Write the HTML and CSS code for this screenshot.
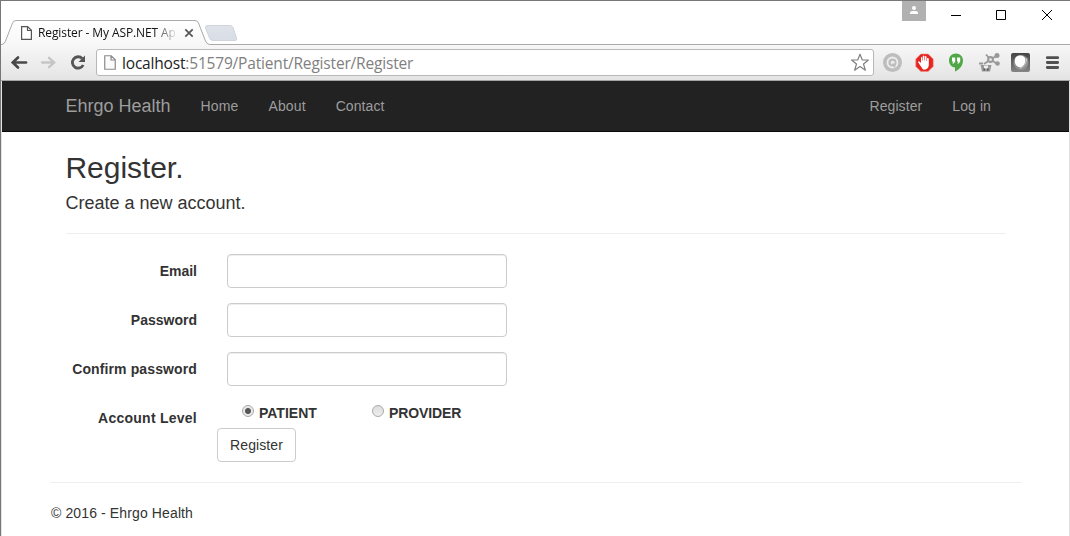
FILE: index.html
```html
<!DOCTYPE html>
<html lang="en">
<head>
<meta charset="utf-8">
<title>Register - My ASP.NET Application</title>
<link rel="stylesheet" href="styles.css">
</head>
<body>
<div class="window">
  <header class="tabstrip">
    <svg class="tab-shapes" width="1069" height="45" viewBox="1 0 1069 45">
      <defs>
        <linearGradient id="tabfill" x1="0" y1="0" x2="0" y2="1"><stop offset="0" stop-color="#fff"/><stop offset="1" stop-color="#f7f7f7"/></linearGradient>
        <linearGradient id="newtab" x1="0" y1="0" x2="0" y2="1"><stop offset="0" stop-color="#dfe3ea"/><stop offset="1" stop-color="#d8dde6"/></linearGradient>
      </defs>
      <path d="M1 44.500H2Q4.500 44 5.500 41L12.500 23Q13.500 20.500 16 20.500H195Q197.500 20.500 198.500 23L205.500 41Q206.500 44 209.500 44.500V45H1Z" fill="url(#tabfill)"/>
      <path d="M1 44.500H2Q4.500 44 5.500 41L12.500 23Q13.500 20.500 16 20.500H195Q197.500 20.500 198.500 23L205.500 41Q206.500 44 209.500 44.500H1070" fill="none" stroke="#aaa"/>
      <path d="M208 25.500H230Q232 25.500 233 27.500L236.500 38Q237.500 40.500 235 40.500H213Q210.500 40.500 209.500 38L205.500 28Q205 25.500 208 25.500Z" fill="url(#newtab)" stroke="#d0d4db"/>
    </svg>
    <div class="tab">
      <svg class="tab-page" width="11" height="14" viewBox="0 0 11 14"><path d="M.6.6h6l3.800 3.700v9H.6zM6.500 1v3.500h3.700" fill="#fff" stroke="#555" stroke-width="1.200"/></svg>
      <span class="tab-title">Register - My ASP.NET Ap</span>
      <svg class="tab-close" width="10" height="10" viewBox="0 0 10 10"><path d="M1.300 1.300l7.400 7.400M8.700 1.300l-7.400 7.400" stroke="#555" stroke-width="1.700"/></svg>
    </div>
    <div class="controls">
      <div class="profile"><svg width="10" height="9" viewBox="0 0 10 9"><circle cx="5" cy="2" r="2" fill="#fff"/><path d="M1 8V6.500Q1 5 3.500 5h3Q9 5 9 6.500V8z" fill="#fff"/></svg></div>
      <svg class="winbtns" width="105" height="12" viewBox="0 0 105 12"><g fill="none" stroke="#000"><path d="M0 6.500h10M45.500 1.500h9v9h-9zM91 1l10 10M101 1L91 11"/></g></svg>
    </div>
  </header>
  <div class="toolbar">
    <svg class="nav-icons" width="80" height="20" viewBox="0 0 80 20">
      <g fill="none" stroke-linecap="round"><path d="M4.500 9.500H17" stroke="#484848" stroke-width="2.700"/><path d="M9 4.500L3.800 9.500L9 14.500" stroke="#484848" stroke-width="2.700"/><path d="M33 9.500H44M40 4.800L45.200 9.500L40 14.200" stroke="#c5c5c5" stroke-width="2.300"/></g>
      <path d="M73.200 5.500A5.700 5.700 0 1 0 74.200 12" fill="none" stroke="#555" stroke-width="2.800"/><path d="M76 2.500v6.500h-6.500z" fill="#555"/>
    </svg>
    <div class="omnibox">
      <svg class="url-page" width="12" height="15" viewBox="0 0 12 15"><path d="M.75.75h6.500l4 4v9.500H.75zM7 1v4h4" fill="#fbfbfb" stroke="#8b8b8b" stroke-width="1.200"/></svg>
      <span class="url"><b>localhost</b>:51579/Patient/Register/Register</span>
      <svg class="star" width="20" height="19" viewBox="0 0 20 19"><path d="M10 1.300L12.300 7h6.100l-4.900 4 1.900 6.200L10 13.500l-5.400 3.700L6.500 11 1.600 7h6.100z" fill="#fff" stroke="#808080" stroke-width="1.200" stroke-linejoin="round"/></svg>
    </div>
    <svg class="extensions" width="187" height="24" viewBox="0 0 187 24">
      <defs><linearGradient id="badge" x1="0" y1="0" x2="0" y2="1"><stop offset="0" stop-color="#444"/><stop offset="1" stop-color="#858585"/></linearGradient></defs>
      <circle cx="9.500" cy="11.500" r="9.500" fill="#bdbdbd"/><circle cx="9.500" cy="11.500" r="5" fill="none" stroke="#eee" stroke-width="1.800"/><circle cx="9.700" cy="11.700" r="2" fill="#eee"/><path d="M9 13.500h2.500v3" fill="none" stroke="#bdbdbd" stroke-width="1.800"/>
      <path d="M37.800 3h7.400l5 5v7.400l-5 5h-7.400l-5-5V8z" fill="#e62520" stroke="#f58b82" stroke-width=".6"/>
      <path d="M38 15.500Q36 12.500 35 11Q35.500 9.500 37 11L38 12V6.700Q38 5.500 39.300 6.500V9.500h.5V5Q40.600 4 41.400 5V9.500h.5V5.500Q42.700 4.500 43.500 5.500V10h.5V7.200Q45 6.500 45.800 7.500V14Q45.500 17.500 42.500 18.500H40Z" fill="#fff"/>
      <path d="M73 2.500C68.500 2.500 66 5.500 66 9.500s3 7 6 7v4c4.500-2 8-6 8-11 0-4-3-7-7-7z" fill="#50a746"/><path d="M69 6.500h3.200v4L70.700 12.500H69.300l1-2H69zM74 6.500h3.200v4L75.700 12.500h-1.400l1-2H74z" fill="#fff"/>
      <g fill="none" stroke="#999" stroke-width="1.800"><path d="M103 3.500l4.500 5L115 4M107.500 8.500l7.500 5M107.500 8.500L101 13"/><circle cx="107.500" cy="8.500" r="2.500" fill="#ddd"/></g><g fill="#999"><circle cx="114" cy="4.500" r="2.500"/><circle cx="114.500" cy="12.500" r="2.300"/><path d="M96 11.500h4v2h-4zM97.500 14h11l-1.500 6.500h-8z"/></g><path d="M101 14.500h4v3h-4z" fill="#eee"/><path d="M100.500 17.500h1.500v2h-1.500zM104 17.500h1.500v2H104z" fill="#555"/>
      <rect x="128" y="2" width="19" height="19" rx="2" fill="url(#badge)"/><circle cx="138" cy="11.500" r="7.500" fill="#929292"/><path d="M136 4.500Q142 4 142.500 9Q142 15 137 16.500Q131 14.500 132 9Q132 5.500 136 4.500" fill="#fff"/><path d="M137 17.500Q143 15 144 7" fill="none" stroke="#ccc" stroke-width="1"/>
      <path d="M164.300 6.700h10.400M164.300 11.500h10.400M164.300 16.500h10.400" stroke="#505050" stroke-width="2.800" stroke-linecap="round"/>
    </svg>
  </div>

  <div class="viewport">
    <nav class="navbar">
      <a class="brand">Ehrgo Health</a>
      <a class="home">Home</a><a class="about">About</a><a class="contact">Contact</a>
      <a class="signup">Register</a><a class="login">Log in</a>
    </nav>

    <main class="page">
      <form class="account">
        <h2>Register.</h2>
        <h4>Create a new account.</h4>
        <hr>
        <div class="row"><label for="email">Email</label><input id="email" class="field" type="text"></div>
        <div class="row"><label for="pw">Password</label><input id="pw" class="field" type="password"></div>
        <div class="row"><label for="pw2" class="confirm">Confirm password</label><input id="pw2" class="field" type="password"></div>
        <div class="row levels">
          <label class="level-label">Account Level</label>
          <div class="level-options">
            <label class="option patient"><span class="radio checked"></span><span>PATIENT</span></label>
            <label class="option provider"><span class="radio"></span><span>PROVIDER</span></label>
          </div>
        </div>
        <button class="submit" type="button">Register</button>
      </form>
      <footer><hr><p>© 2016 - Ehrgo Health</p></footer>
    </main>
  </div>
</div>
</body>
</html>
```
FILE: styles.css
```css
* { box-sizing: border-box; }
body { margin: 0; background: #fff; color: #333; font: 14px/20px "Liberation Sans", Arial, sans-serif; }
.window { display: flex; flex-direction: column; height: 536px; overflow: hidden; border-top: 1px solid #777; border-left: 1px solid #777; }

.tabstrip { position: relative; height: 43px; display: flex; justify-content: space-between; }
.tab-shapes { position: absolute; left: 0; top: -1px; }
.tab { position: relative; display: flex; align-items: center; width: 200px; height: 24px; margin-top: 20px; padding-left: 20px; }
.tab-title { width: 137px; margin-left: 6px; overflow: hidden; white-space: nowrap; color: #111; font: 12px/18px "Open Sans", sans-serif; letter-spacing: -.1px; -webkit-mask-image: linear-gradient(90deg, #000 116px, transparent 140px); mask-image: linear-gradient(90deg, #000 116px, transparent 140px); }
.tab-close { margin-left: 9px; }
.controls { position: relative; display: flex; align-items: flex-start; }
.profile { display: flex; justify-content: center; width: 24px; height: 20px; padding-top: 5px; background: #b1b1b1; }
.winbtns { margin: 8px 14px 0 25px; }

.toolbar { display: flex; flex: none; align-items: center; height: 37px; border-top: 1px solid #aaa; border-bottom: 1px solid #a3a6a5; background: linear-gradient(#f7f7f7, #e4e4e4); }
.nav-icons { margin-left: 8px; }
.omnibox { display: flex; align-items: center; width: 778px; height: 27px; margin-left: 7px; padding-left: 7px; border: 1px solid #b8b8b8; border-radius: 3px; background: #fff; }
.url { flex: 1; margin-left: 6px; color: #808080; font: 15.500px/24px "Open Sans", sans-serif; letter-spacing: -.18px; white-space: nowrap; }
.url b { color: #222; font-weight: 400; }
.star { margin-right: 3px; }
.extensions { margin-left: 9px; }

.viewport { flex: 1; border-left: 1px solid #e4e4e4; border-right: 1px solid #ddd; }
.navbar { display: flex; align-items: center; height: 51px; padding: 0 78px 1px 64px; border-bottom: 1px solid #080808; background: #222; color: #9d9d9d; }
.brand { margin-right: 30px; margin-left: -.5px; font-size: 18px; }
.home { margin-right: 30px; letter-spacing: .15px; }
.about { margin-right: 30px; letter-spacing: .1px; }
.contact { letter-spacing: .1px; }
.signup { margin: 0 30px 0 auto; letter-spacing: .08px; }
.login { letter-spacing: .1px; }

.page { padding: 0 48px 0 49px; }
.account { padding: 0 15px; }
h2 { margin: 19px 0 9px; font-size: 30px; line-height: 33px; font-weight: 400; letter-spacing: -.05px; text-indent: -.5px; }
h4 { margin: 9px 0 10px; font-size: 18px; line-height: 20px; font-weight: 400; text-indent: -.5px; }
hr { height: 1px; margin: 20px 0; border: 0; background: #eee; }
.row { display: flex; margin-bottom: 15px; }
.row > label { width: 131px; margin-right: 30px; padding-top: 7px; text-align: right; white-space: nowrap; font-weight: 700; }
.row > .confirm { letter-spacing: .12px; }
.row > .level-label { letter-spacing: .25px; }
.field { width: 280px; height: 34px; border: 1px solid #ccc; border-radius: 4px; background: #fff; box-shadow: inset 0 1px 1px rgba(0, 0, 0, .075); }
.levels { height: 27px; margin-bottom: 0; }
.level-options { display: flex; padding: 2px 0 0 15px; font-weight: 700; }
.option { display: flex; align-items: flex-start; }
.patient { width: 130px; }
.provider { letter-spacing: -.1px; }
.radio { width: 12px; height: 12px; margin: 2px 5px 0 0; border: 1px solid #aaa; border-radius: 50%; background: linear-gradient(#ddd, #eee); }
.checked { background: radial-gradient(circle, #555 0 2.500px, #e8e8e8 3.500px); }
.submit { display: block; width: 79px; height: 34px; margin-left: 151px; padding: 0; border: 1px solid #ccc; border-radius: 4px; background: #fff; color: #333; font: inherit; letter-spacing: .1px; }
footer p { margin: 0; letter-spacing: .12px; }
```
